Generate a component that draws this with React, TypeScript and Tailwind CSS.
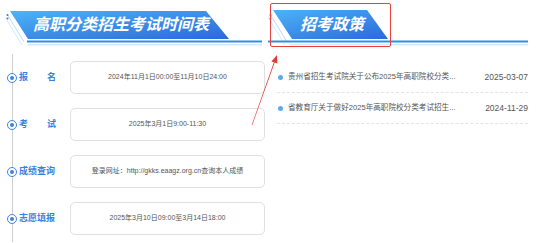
const FONT = { fontFamily: '"Liberation Sans","Noto Sans CJK SC",sans-serif' }

const steps = [
  { label: ['报', '名'], text: '2024年11月1日00:00至11月10日24:00' },
  { label: ['考', '试'], text: '2025年3月1日9:00-11:30' },
  { label: ['成绩查询'], text: '登录网址：http://gkks.eaagz.org.cn查询本人成绩' },
  { label: ['志愿填报'], text: '2025年3月10日09:00至3月14日18:00' },
]

const news = [
  { title: '贵州省招生考试院关于公布2025年高职院校分类...', date: '2025-03-07' },
  { title: '省教育厅关于做好2025年高职院校分类考试招生...', date: '2024-11-29' },
]

function Grad({ id }: { id: string }) {
  return (
    <defs>
      <linearGradient id={id} x1="0" y1="0" x2="1" y2="1">
        <stop offset="0" stopColor="#4db3f6" />
        <stop offset="1" stopColor="#2a69dc" />
      </linearGradient>
    </defs>
  )
}

export default function App() {
  return (
    <div className="relative flex w-[540px] h-[243px] bg-white overflow-hidden" style={FONT}>
      {/* 左：时间表 */}
      <div className="w-[268px] shrink-0">
        <div className="relative h-[48px]">
          <svg className="absolute inset-0" width="268" height="48">
            <Grad id="gl" />
            <polyline points="7,14 24,42" stroke="#b9ddf8" strokeWidth="1" fill="none" />
            <polyline points="5,17 22,45" stroke="#d2e9fb" strokeWidth="1" fill="none" />
            <circle cx="7.5" cy="15" r="1" fill="#2f7fe0" />
            <circle cx="7.5" cy="18.5" r="1" fill="#2f7fe0" />
            <polygon points="10,11 206,11 229,39 28,39" fill="url(#gl)" />
            <rect x="27" y="40.5" width="235" height="2" fill="#2d90e9" />
            <rect x="28" y="44" width="234" height="1.5" fill="#d3e9fa" />
          </svg>
          <div className="relative pl-[33px] pt-[14px] text-[16px] leading-[22px] font-bold italic text-white">
            高职分类招生考试时间表
          </div>
        </div>

        <div className="ml-[12px] mt-[6px] border-l border-[#cfcfcf]">
          {steps.map((s, i) => (
            <div key={i} className="flex items-center h-[47px]">
              <div className="-ml-[6px] w-[10px] h-[10px] rounded-full border-[1.5px] border-[#3d84e0] bg-white flex items-center justify-center">
                <div className="w-[4px] h-[4px] rounded-full bg-[#3d84e0]" />
              </div>
              <div className="ml-[2px] w-[37px] flex justify-between text-[9px] font-bold text-[#3b7fdc] whitespace-nowrap">
                {s.label.map(c => <span key={c}>{c}</span>)}
              </div>
              <div className="ml-[14px] w-[195px] h-[33px] rounded-[5px] border border-[#e0e0e0] flex items-center justify-center text-[7px] text-[#555] whitespace-nowrap">
                {s.text}
              </div>
            </div>
          ))}
        </div>
      </div>

      {/* 右：招考政策 */}
      <div className="flex-1 min-w-0">
        <div className="relative h-[48px]">
          <svg className="absolute inset-0" width="272" height="48">
            <Grad id="gr" />
            <polyline points="2,14 19,42" stroke="#b9ddf8" strokeWidth="1" fill="none" />
            <polyline points="0,17 17,45" stroke="#d2e9fb" strokeWidth="1" fill="none" />
            <circle cx="2.5" cy="15" r="1" fill="#2f7fe0" />
            <circle cx="2.5" cy="18.5" r="1" fill="#2f7fe0" />
            <polygon points="5,10 99,10 120,39 24,39" fill="url(#gr)" />
            <rect x="0" y="40.5" width="260" height="2" fill="#2d90e9" />
            <rect x="22" y="44" width="238" height="1.5" fill="#d3e9fa" />
          </svg>
          <div className="absolute left-[2px] top-[3px] w-[121px] h-[44px] border-[1.5px] border-[#e8403a] rounded-[2px]" />
          <div className="relative pl-[32px] pt-[14px] text-[16px] leading-[22px] font-bold italic text-white">
            招考政策
          </div>
        </div>

        <div className="pl-[9px] pr-[12px] mt-[14px]">
          {news.map(n => (
            <div key={n.date} className="flex items-center h-[31px] border-b border-dashed border-[#dfe3ea] text-[7.6px] text-[#555]">
              <span className="w-[5px] h-[5px] rounded-full bg-[#5aa9ea] ml-[1px] mr-[5px] shrink-0" />
              <span className="flex-1 whitespace-nowrap">{n.title}</span>
              <span className="text-[8.5px] whitespace-nowrap">{n.date}</span>
            </div>
          ))}
        </div>
      </div>

      {/* 红色箭头 */}
      <svg className="absolute inset-0 pointer-events-none" width="540" height="243">
        <polygon points="251.7,125 252.3,125 274.7,62.6 273.9,62.3" fill="#e53935" />
        <polygon points="277,55 277.4,63.5 271.4,61.4" fill="#e53935" />
      </svg>
    </div>
  )
}
